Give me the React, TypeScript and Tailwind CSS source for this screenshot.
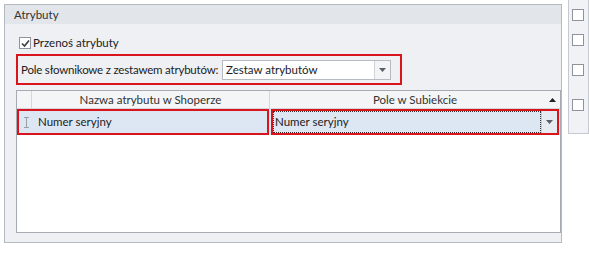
import React from 'react';

const font = { fontFamily: 'Lato, "Noto Sans", sans-serif' };

function DropArrow() {
  return (
    <svg width="7" height="4" viewBox="0 0 7 4">
      <path d="M0 0 H7 L3.5 4 Z" fill="#5a5f66" />
    </svg>
  );
}

function CheckBox({ checked }: { checked?: boolean }) {
  return (
    <div className="w-[12px] h-[12px] shrink-0 border border-[#8f949b] bg-white flex items-center justify-center">
      {checked && (
        <svg width="9" height="9" viewBox="0 0 9 9">
          <path d="M1 4.5 L3.5 7 L8 1.5" stroke="#3a3d42" strokeWidth="1.6" fill="none" />
        </svg>
      )}
    </div>
  );
}

// text cursor glyph shown in the row indicator column
function IBeam() {
  return (
    <svg width="7" height="11" viewBox="0 0 7 11">
      <path d="M1 0.5 H6 M3.5 0.5 V10.5 M1 10.5 H6" stroke="#9a9ea5" strokeWidth="1" fill="none" />
    </svg>
  );
}

function AttributeGrid() {
  return (
    <div className="w-[545px] h-[143px] border border-[#a6abb3] bg-white flex flex-col">
      <div className="h-[18px] flex bg-[#f4f5f7] border-b border-[#d3d6db] text-[#333]">
        <div className="w-[15px] border-r border-[#d3d6db]" />
        <div className="w-[238px] border-r border-[#d3d6db] flex items-center justify-center">Nazwa atrybutu w Shoperze</div>
        <div className="flex-1 flex items-center justify-center relative">
          Pole w Subiekcie
          <svg className="absolute right-[4px] top-[7px]" width="7" height="4" viewBox="0 0 7 4">
            <path d="M0 4 H7 L3.5 0 Z" fill="#222" />
          </svg>
        </div>
      </div>
      <div className="h-[26px] flex gap-[2px] bg-[#dde7f3] text-[#1c1c1c]">
        <div className="w-[252px] border-[2px] border-[#d9141c] flex items-center">
          <div className="w-[14px] flex justify-center">
            <IBeam />
          </div>
          <span className="ml-[5px]">Numer seryjny</span>
        </div>
        <div className="flex-1 border-[2px] border-[#d9141c] flex items-stretch mr-[1px]">
          <div className="flex-1 border border-dotted border-[#333] flex items-center pl-[1px]">Numer seryjny</div>
          <div className="w-[16px] border-l border-[#c7cad0] bg-[#e6ebf2] flex items-center justify-center">
            <DropArrow />
          </div>
        </div>
      </div>
      <div className="flex-1" />
    </div>
  );
}

export default function App() {
  return (
    <div className="w-[589px] h-[268px] bg-white flex overflow-hidden whitespace-nowrap text-[11.5px] text-[#222]" style={font}>
      <div className="ml-[4px] mt-[4px] w-[569px] h-[239px] border border-[#b4b8c0] bg-[#eef0f4] flex flex-col">
        <div className="h-[19px] bg-[#e2e5ea] pl-[9px] flex items-center text-[#333]">Atrybuty</div>
        <div className="pl-[11px] flex flex-col">
          <div className="mt-[13px] h-[12px] flex items-center gap-[2px] pl-[3px]">
            <CheckBox checked />
            <span>Przenoś atrybuty</span>
          </div>
          <div className="mt-[5px] w-[386px] h-[31px] border-[2px] border-[#d9141c] flex items-center pl-[3px]">
            <span className="w-[201px] shrink-0 tracking-[-0.2px]">Pole słownikowe z zestawem atrybutów:</span>
            <div className="w-[169px] h-[20px] border border-[#b6bac1] bg-white flex">
              <div className="flex-1 flex items-center pl-[3px]">Zestaw atrybutów</div>
              <div className="w-[16px] border-l border-[#d0d3d8] bg-[#f3f4f6] flex items-center justify-center">
                <DropArrow />
              </div>
            </div>
          </div>
          <div className="mt-[5px]">
            <AttributeGrid />
          </div>
        </div>
      </div>
      <div className="ml-[6px] -mt-[2px] w-[40px] h-[136px] border border-[#c6c9cf] bg-[#f1f2f5] flex flex-col pl-[3px]">
        <div className="mt-[10px]"><CheckBox /></div>
        <div className="mt-[13px]"><CheckBox /></div>
        <div className="mt-[18px]"><CheckBox /></div>
        <div className="mt-[23px]"><CheckBox /></div>
      </div>
    </div>
  );
}
